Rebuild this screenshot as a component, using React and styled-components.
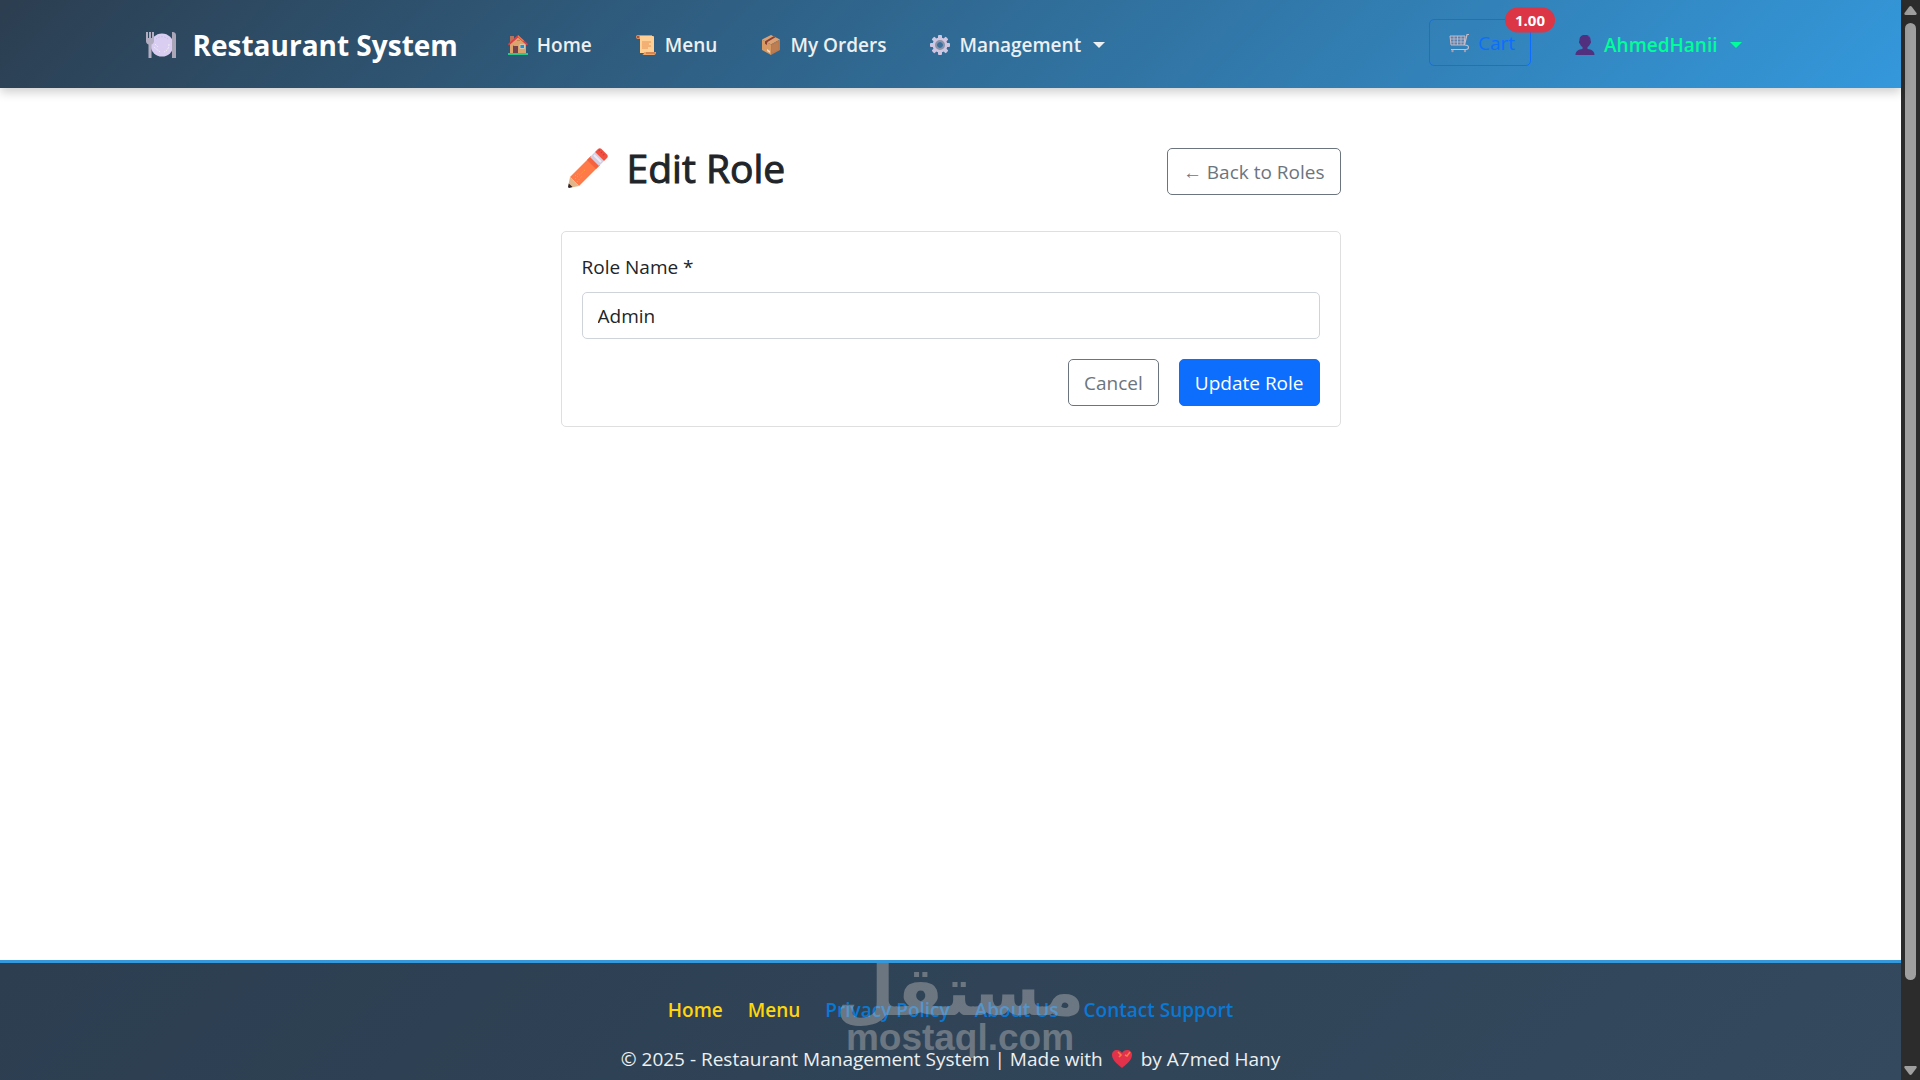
import React from 'react';
import styled, { createGlobalStyle } from 'styled-components';

const GlobalStyle = createGlobalStyle`
  *, *::before, *::after {
    box-sizing: border-box;
  }

  body {
    margin: 0;
    font-family: 'Open Sans', 'Noto Sans', sans-serif;
    font-size: 19px;
    line-height: 30px;
    color: #212529;
    background: #fff;
  }

  button, input {
    font: inherit;
  }

  a {
    text-decoration: none;
  }
`;

const Shell = styled.div`
  position: relative;
  display: flex;
  min-height: 100vh;
`;

const Page = styled.div`
  flex: 1;
  min-width: 0;
  display: flex;
  flex-direction: column;
`;

/* ---------- header ---------- */

const Header = styled.header`
  position: relative;
  background: linear-gradient(135deg, #2c3e50, #3498db);
  box-shadow: 0 4px 10px rgba(0, 0, 0, 0.2);
`;

const Navbar = styled.nav`
  max-width: 1650px;
  min-height: 88px;
  margin: 0 auto;
  padding: 2px 20px 0;
  display: flex;
  align-items: center;
  gap: 50px;
`;

const Brand = styled.a`
  display: flex;
  align-items: center;
  gap: 17px;
  color: #fff;
  font-size: 28px;
  font-weight: 700;
`;

const NavList = styled.ul`
  display: flex;
  align-items: center;
  gap: 44px;
  flex: 1;
  margin: 0;
  padding: 0;
  list-style: none;
`;

const NavLink = styled.a`
  display: flex;
  align-items: center;
  gap: 9px;
  color: #ecf0f1;
  font-weight: 600;
`;

const NavToggle = styled.button`
  display: flex;
  align-items: center;
  gap: 9px;
  padding: 0;
  border: 0;
  background: none;
  color: ${({ $accent }) => ($accent ? '#00ff99' : '#ecf0f1')};
  font-weight: 600;
  cursor: pointer;

  &::after {
    content: '';
    margin: 0 0 0 3px;
    border-top: 6px solid;
    border-left: 6px solid transparent;
    border-right: 6px solid transparent;
  }
`;

const UserArea = styled.div`
  display: flex;
  align-items: center;
  gap: 44px;
  padding-right: 14px;
`;

const CartLink = styled.a`
  position: relative;
  display: flex;
  align-items: center;
  gap: 9px;
  height: 47px;
  margin-bottom: 5px;
  padding: 0 15px 0 19px;
  border: 1px solid #0d6efd;
  border-radius: 5px;
  color: #0d6efd;
`;

const Badge = styled.span`
  position: absolute;
  top: 0;
  left: 100%;
  transform: translate(-50%, -50%);
  padding: 0 10px;
  border-radius: 13px;
  background: #dc3545;
  color: #fff;
  font-size: 15px;
  font-weight: 700;
  line-height: 25px;
`;

/* ---------- content ---------- */

const Main = styled.main`
  flex: 1;
  width: 100%;
  max-width: 780px;
  margin: 0 auto;
  padding: 56px 0 40px;
`;

const TitleRow = styled.div`
  display: flex;
  align-items: flex-end;
  justify-content: space-between;
  margin-bottom: 36px;
`;

const Title = styled.h1`
  display: flex;
  align-items: center;
  gap: 19px;
  margin: 0;
  padding: 0 0 3px 7px;
  font-size: 39px;
  font-weight: 500;
  line-height: 48px;
  -webkit-text-stroke: 1px #212529;
`;

const Button = styled.button`
  display: inline-flex;
  align-items: center;
  justify-content: center;
  height: 47px;
  padding: 0 15px;
  border: 1px solid ${({ $primary }) => ($primary ? '#0d6efd' : '#6c757d')};
  border-radius: 5px;
  background: ${({ $primary }) => ($primary ? '#0d6efd' : 'transparent')};
  color: ${({ $primary }) => ($primary ? '#fff' : '#6c757d')};
  cursor: pointer;
`;

const Card = styled.form`
  padding: 20px;
  border: 1px solid #dfdfdf;
  border-radius: 5px;
`;

const Label = styled.label`
  display: block;
  margin-bottom: 10px;
`;

const Input = styled.input`
  display: block;
  width: 100%;
  height: 47px;
  padding: 0 15px;
  border: 1px solid #ced4da;
  border-radius: 5px;
  color: #212529;
  background: #fff;
`;

const Actions = styled.div`
  display: flex;
  justify-content: flex-end;
  gap: 20px;
  margin-top: 20px;
`;

/* ---------- footer ---------- */

const Footer = styled.footer`
  display: flex;
  flex-direction: column;
  align-items: center;
  gap: 19px;
  padding: 32px 20px 6px;
  border-top: 3px solid #3498db;
  background: linear-gradient(135deg, #2c3e50, #34495e);
  color: #ecf0f1;
`;

const FooterLinks = styled.div`
  display: flex;
  gap: 25px;
`;

const FooterLink = styled.a`
  color: ${({ $highlight }) => ($highlight ? '#ffd60a' : '#0a78d4')};
  font-weight: 600;
`;

const Copyright = styled.p`
  display: flex;
  align-items: center;
  gap: 9px;
  margin: 0;
`;

const Watermark = styled.div`
  position: absolute;
  bottom: 22px;
  left: 50%;
  transform: translateX(-50%);
  display: flex;
  flex-direction: column;
  align-items: center;
  color: #c0c0c0;
  opacity: 0.41;
  pointer-events: none;
  font-weight: 700;
`;

const WatermarkArabic = styled.span`
  font-family: 'DejaVu Sans', sans-serif;
  font-size: 68px;
  line-height: 52px;
`;

const WatermarkLatin = styled.span`
  font-family: 'Liberation Sans', sans-serif;
  font-size: 37px;
  line-height: 40px;
`;

/* ---------- scrollbar ---------- */

const Scrollbar = styled.div`
  width: 19px;
  padding: 6px 0 5px;
  display: flex;
  flex-direction: column;
  align-items: center;
  gap: 8px;
  background: #2c2c2c;
`;

const Track = styled.div`
  flex: 1;
  width: 11px;
  display: flex;
  flex-direction: column;
`;

const Thumb = styled.div`
  flex: 0 0 92.5%;
  border-radius: 6px;
  background: #9f9f9f;
`;

/* ---------- icons ---------- */

const Icon = ({ size = 20, box = 20, children }) => (
  <svg width={size} height={size} viewBox={`0 0 ${box} ${box}`} fill="none" aria-hidden="true">
    {children}
  </svg>
);

const PlateIcon = () => (
  <Icon size={30} box={30}>
    <circle cx="16" cy="15" r="11.5" fill="#d9cdf2" />
    <path d="M10 9a9 9 0 0 1 12 0" stroke="#c2b4e0" strokeDasharray="1 2" />
    <path d="M8 17l6 5M9 14l3 3M23 14c0 4-2 7-5 8" stroke="#eef0ea" strokeDasharray="2 1" />
    <path d="M0 2h2v6h1V2h2v6h1V2h2v9c0 2-1 3-2.500 3.500V28H2.500V14.500C1 14 0 13 0 11z" fill="#b3adc2" />
    <path d="M26 28V2c3 0 4 1 4 4v22z" fill="#aaa6b8" />
  </Icon>
);

const HouseIcon = () => (
  <Icon>
    <path d="M2 1h4v6H2z" fill="#b5735c" />
    <path d="M2 9l8-7 8 7v9H2z" fill="#dca36d" />
    <path d="M5 10h1v7H5zM9 5h3v1H9z" fill="#c18352" />
    <path d="M0 9L10 0l10 9-1 1.500-9-8-9 8z" fill="#e53b45" />
    <path d="M10 0l6 5.500-1 1-5-4.500z" fill="#ff7043" />
    <path d="M5 11h5v7H5z" fill="#74414f" />
    <path d="M12 9.500h4.500v4H12z" fill="#1595e3" stroke="#e8d2b2" strokeWidth="0.8" />
    <path d="M0 18h20v2H0z" fill="#27c98f" />
  </Icon>
);

const ScrollIcon = () => (
  <Icon>
    <path d="M3 1h14a1 1 0 0 1 1 1v16H4V4z" fill="#ffcf94" />
    <path d="M0 1.500C0 .5 1 0 2 0h14v1H4v3H1.500C.5 4 0 3 0 1.500z" fill="#dd8c5a" />
    <circle cx="2" cy="2" r="1" fill="#8f4538" />
    <path d="M6 7h9M6 9h7M6 11h9M6 13h6" stroke="#e69254" />
    <path d="M8 17h12c0 2-1 3-2 3H6c1 0 2-1 2-3z" fill="#eda56c" />
    <path d="M10 18h9" stroke="#b96943" />
  </Icon>
);

const BoxIcon = () => (
  <Icon>
    <path d="M10 0l9 4.500-9 5-9-5z" fill="#dca273" />
    <path d="M1 4.500l9 5V20l-9-5z" fill="#d89a62" />
    <path d="M19 4.500l-9 5V20l9-5z" fill="#b97a50" />
    <path d="M12.500 1.200l2 1L6 7.300V10L4 8.800V6.200z" fill="#8a3f35" />
    <path d="M12 10v7M14 9v7M16 8v7" stroke="#c98c5e" strokeWidth="0.6" />
    <path d="M6 14l3 2v2l-3-2z" fill="#e8dcd2" />
  </Icon>
);

const GearIcon = () => (
  <Icon>
    <g fill="#cfc6e2">
      {[0, 45, 90, 135].map(angle => (
        <rect key={angle} x="8" y="0" width="4" height="20" rx="1" transform={`rotate(${angle} 10 10)`} />
      ))}
      <circle cx="10" cy="10" r="7.5" />
    </g>
    <circle cx="10" cy="10" r="4" stroke="#8b94a6" strokeWidth="2" />
    <circle cx="10" cy="10" r="3" fill="#3b6f9c" />
  </Icon>
);

const TrolleyIcon = () => (
  <Icon>
    <path d="M1 3h15l-1 9H2z" fill="#5b83ad" stroke="#c5bcc9" />
    <path d="M5 3v9M8.500 3v9M12 3v9M1 6h15M1.500 9H16" stroke="#c5bcc9" strokeWidth="0.8" />
    <path d="M20 1.500h-2l-2.500 10.500c3 0 4 1 4 2.500s-1 2-2.500 2H2" stroke="#c5bcc9" strokeWidth="1.200" />
    <circle cx="3.500" cy="18" r="1.200" fill="#a79dac" />
    <circle cx="16" cy="18" r="1.200" fill="#a79dac" />
  </Icon>
);

const UserIcon = () => (
  <Icon>
    <path d="M10 0c4 0 5.500 2 5.500 5 0 1 .5 1 .5 2s-.5 1.500-1 2c-.5 1.500-1.500 2.500-2.500 3v2c4 .5 7 2 7 6H.5c0-4 3-5.500 7-6v-2C6.500 11.500 5.500 10.500 5 9c-.5-.5-1-1-1-2s.5-1 .5-2c0-3 1.500-5 5.500-5z" fill="#50307f" />
    <path d="M13 1c2 1 2.500 2.500 2 5" stroke="#6c3fa3" strokeDasharray="1 1" />
  </Icon>
);

const PencilIcon = () => (
  <Icon size={40} box={40}>
    <path d="M23 8l9 9-21 21-9-9z" fill="#ff7a48" />
    <path d="M23 8l9 9-4 4-9-9z" fill="#f4623f" />
    <path d="M2 29l9 9L1 40l-1-1z" fill="#e3b58b" />
    <path d="M.8 35.500L4.500 39 1 40l-1-1z" fill="#2b2530" />
    <path d="M27 4l9 9-5 5-9-9z" fill="#d4cde0" />
    <path d="M26 7l7 7" stroke="#efeaf7" strokeWidth="2" />
    <path d="M27 4l3-3c1-1 2.500-1 3.500 0L39 6.500c1 1 1 2.500 0 3.500l-3 3z" fill="#f0523f" />
    <path d="M31 2l6 6" stroke="#dc3048" strokeWidth="2" strokeDasharray="1 2" />
    <path d="M7 31l11-10M9 34l5-6M7 28l4-3" stroke="#ffb52e" strokeDasharray="1 2" />
  </Icon>
);

const HeartIcon = () => (
  <Icon>
    <path d="M10 19C8 17 0 12 0 6c0-3 2-5 5-5 2 0 4 1 5 3 1-2 3-3 5-3 3 0 5 2 5 5 0 6-8 11-10 13z" fill="#e2324b" />
    <path d="M6 3l3 3-2 2M18 3l-3 4-2-1" stroke="#ff7a48" strokeWidth="1.500" />
  </Icon>
);

const Arrow = ({ down }) => (
  <svg width="13" height="9" viewBox="0 0 13 9" aria-hidden="true">
    <path
      d={down ? 'M1.500 0h10c1 0 1.500 1 1 2L8 8c-1 1.300-2 1.300-3 0L.5 2c-.5-1 0-2 1-2z' : 'M1.500 9h10c1 0 1.500-1 1-2L8 1C7-.3 6-.3 5 1L.5 7c-.5 1 0 2 1 2z'}
      fill="#9f9f9f"
    />
  </svg>
);

const navItems = [
  { label: 'Home', icon: <HouseIcon /> },
  { label: 'Menu', icon: <ScrollIcon /> },
  { label: 'My Orders', icon: <BoxIcon /> },
];

const footerItems = [
  { label: 'Home', highlight: true },
  { label: 'Menu', highlight: true },
  { label: 'Privacy Policy' },
  { label: 'About Us' },
  { label: 'Contact Support' },
];

const App = () => (
  <Shell>
    <GlobalStyle />
    <Page>
      <Header>
        <Navbar>
          <Brand href="#">
            <PlateIcon />
            Restaurant System
          </Brand>
          <NavList>
            {navItems.map(item => (
              <li key={item.label}>
                <NavLink href="#">
                  {item.icon}
                  {item.label}
                </NavLink>
              </li>
            ))}
            <li>
              <NavToggle type="button">
                <GearIcon />
                Management
              </NavToggle>
            </li>
          </NavList>
          <UserArea>
            <CartLink href="#">
              <TrolleyIcon />
              Cart
              <Badge>1.00</Badge>
            </CartLink>
            <NavToggle type="button" $accent>
              <UserIcon />
              AhmedHanii
            </NavToggle>
          </UserArea>
        </Navbar>
      </Header>

      <Main>
        <TitleRow>
          <Title>
            <PencilIcon />
            Edit Role
          </Title>
          <Button as="a" href="#">← Back to Roles</Button>
        </TitleRow>
        <Card>
          <Label htmlFor="role-name">Role Name *</Label>
          <Input id="role-name" type="text" defaultValue="Admin" />
          <Actions>
            <Button type="button">Cancel</Button>
            <Button type="submit" $primary>Update Role</Button>
          </Actions>
        </Card>
      </Main>

      <Footer>
        <FooterLinks>
          {footerItems.map(item => (
            <FooterLink key={item.label} href="#" $highlight={item.highlight}>
              {item.label}
            </FooterLink>
          ))}
        </FooterLinks>
        <Copyright>
          © 2025 - Restaurant Management System | Made with
          <HeartIcon />
          by A7med Hany
        </Copyright>
      </Footer>
    </Page>

    <Scrollbar>
      <Arrow />
      <Track>
        <Thumb />
      </Track>
      <Arrow down />
    </Scrollbar>

    <Watermark>
      <WatermarkArabic lang="ar">مستقل</WatermarkArabic>
      <WatermarkLatin>mostaql.com</WatermarkLatin>
    </Watermark>
  </Shell>
);

export default App;
